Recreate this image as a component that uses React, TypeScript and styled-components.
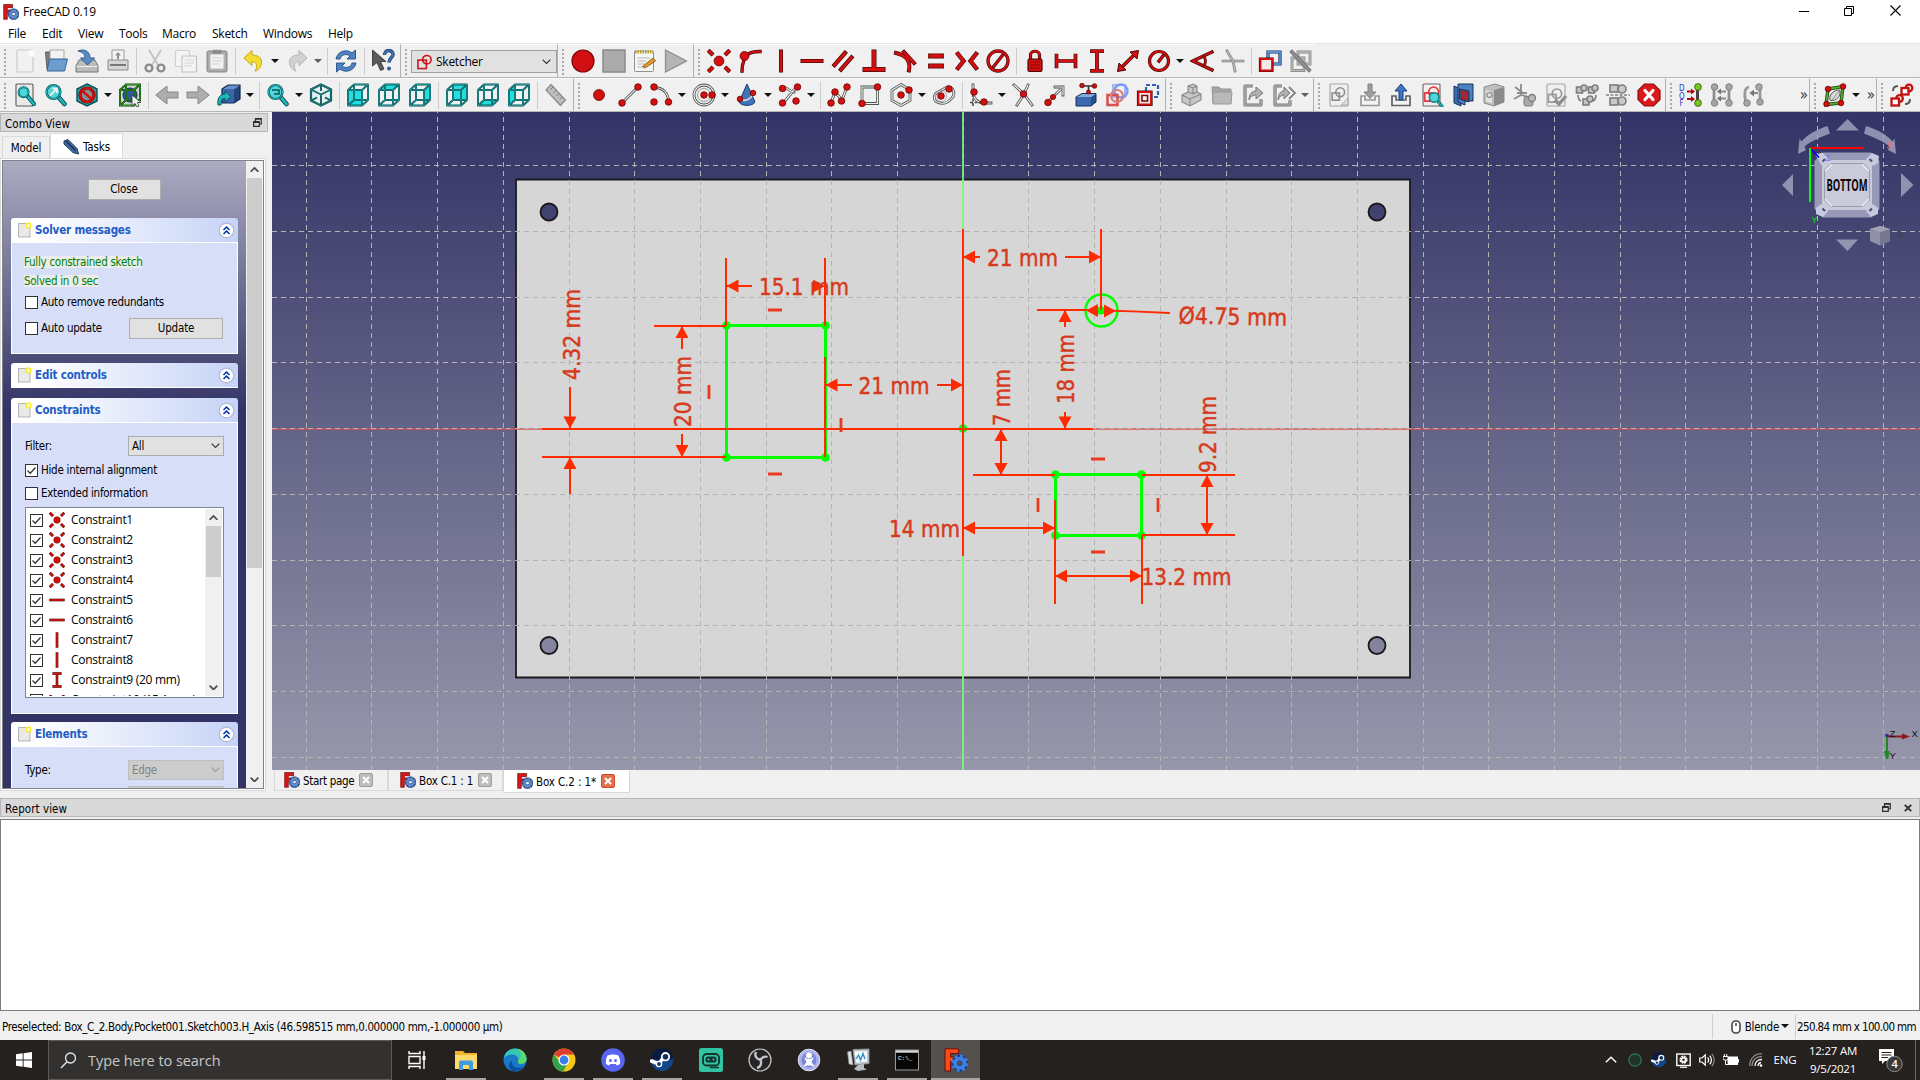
import React from "react";
import styled, { createGlobalStyle, css } from "styled-components";

const TAHOMA = `"DejaVu Sans Condensed", "DejaVu Sans", "Noto Sans", sans-serif`;
const SEGOE = `"Open Sans", "Noto Sans", sans-serif`;

const Global = createGlobalStyle`
  * { box-sizing: border-box; }
  body { margin: 0; background: #f0f0f0; overflow: hidden; }
  svg { display: block; flex: none; }
`;

/* ---------- icon primitives ---------- */

const RED = "#d40f0f";
const DARK = "#4a0808";

type PathProps = { d: string; c?: string; o?: string; w?: number; f?: string; e?: number; cap?: "square" | "butt" };
const Bar = ({ d, c = RED, o = DARK, w = 2.4, f = "none", e = 1.4, cap = "square" }: PathProps) => (
  <g fill={f} strokeLinejoin="miter">
    <path d={d} stroke={o} strokeWidth={w + e} strokeLinecap={cap} />
    <path d={d} stroke={c} strokeWidth={w} strokeLinecap={cap} />
  </g>
);
const Tube = ({ d }: { d: string }) => <Bar d={d} c="#eef0ea" o="#4d534f" w={1.2} e={1.6} />;
const Grey = ({ d, w = 2 }: { d: string; w?: number }) => <Bar d={d} c="#b9b9b9" o="#848484" w={w} e={1.4} />;
const Dot = ({ x, y, r = 3.3, c = RED, o = "#6a0505" }: { x: number; y: number; r?: number; c?: string; o?: string }) => (
  <circle cx={x} cy={y} r={r} fill={c} stroke={o} strokeWidth="0.8" />
);

const cubeEdges = "M2 7H16V22.500H2ZM8 1.500H22V17H8ZM2 7L8 1.500M16 7L22 1.500M16 22.500L22 17M2 22.500L8 17";
const Cube = ({ face }: { face: string }) => (
  <g>
    <path d="M2 7L8 1.500H22V17L16 22.500H2Z" fill="#edf3f3" />
    <path d={face} fill="#22dfe2" />
    <path d={cubeEdges} fill="none" stroke="#0d5558" strokeWidth="1.900" strokeLinejoin="round" />
    <path d={cubeEdges} fill="none" stroke="#25a9ab" strokeWidth="0.700" strokeLinejoin="round" />
  </g>
);
const Lens = ({ x = 9, y = 8, r = 5.5 }: { x?: number; y?: number; r?: number }) => (
  <g>
    <path d={`M${x + r * 0.7} ${y + r * 0.7}L20.5 21`} stroke="#0a5558" strokeWidth="4.6" strokeLinecap="round" />
    <path d={`M${x + r * 0.7} ${y + r * 0.7}L20.5 21`} stroke="#1fb9bd" strokeWidth="2.6" strokeLinecap="round" />
    <circle cx={x} cy={y} r={r} fill="#4fd6d9" stroke="#0a5558" strokeWidth="2.2" />
    <circle cx={x} cy={y} r={r} fill="none" stroke="#27bcc0" strokeWidth="1" />
  </g>
);
const Page = ({ c = "#f4f4f4", o = "#8c8c8c", x = 4, y = 1, w = 16, h = 22 }) => (
  <rect x={x} y={y} width={w} height={h} rx="1" fill={c} stroke={o} strokeWidth="1.1" />
);
const Tray = ({ c = "#8d8d8d" }) => (
  <path d="M3 13H7V17H17V13H21V22.5H3Z" fill="#f3f3f3" stroke={c} strokeWidth="1.7" />
);
const SketchMark = ({ c, x = 0, y = 0, s = 1 }: { c: string; x?: number; y?: number; s?: number }) => (
  <g transform={`translate(${x} ${y}) scale(${s})`} fill="none" stroke={c} strokeWidth="2">
    <rect x="4" y="10" width="9" height="9" />
    <circle cx="14" cy="9" r="5.5" />
  </g>
);
const FreeCadMark = ({ bright = false }: { bright?: boolean }) => (
  <g fill="none">
    <path d="M1 .8H14.500V5.500H6.500V9H11V13.500H6.500V23H1Z" fill={bright ? "#ff4a14" : "#d8171b"} stroke="#6e0b0b" strokeWidth="1" />
    <circle cx="15.800" cy="15.200" r="5.300" stroke="#1f3c6e" strokeWidth="6.400" />
    <circle cx="15.800" cy="15.200" r="7.200" stroke={bright ? "#3b7be0" : "#4a78bb"} strokeWidth="2.800" strokeDasharray="3.200 2.450" />
    <circle cx="15.800" cy="15.200" r="4.600" stroke={bright ? "#3f80e6" : "#5f8bca"} strokeWidth="3.800" />
  </g>
);
const SteamMark = () => (
  <g>
    <circle cx="12" cy="12" r="11" fill="#12478b" />
    <path d="M1 11A11 11 0 0 1 23 11L14 13Z" fill="#0b1b3f" />
    <path d="M1.5 13L9 16L13 10" stroke="#fff" strokeWidth="3.6" fill="none" strokeLinecap="round" />
    <circle cx="15.5" cy="8.7" r="3.7" fill="#12305f" stroke="#fff" strokeWidth="1.8" />
    <circle cx="9" cy="16" r="2.6" fill="#123a70" stroke="#fff" strokeWidth="1.3" />
  </g>
);

const ICONS: Record<string, React.ReactNode> = {
  /* file */
  new: <g><Page c="#f1f1f1" o="#c9c9c9" /><circle cx="18.5" cy="4.5" r="3.6" fill="#fafafa" /></g>,
  open: <g><path d="M1.5 3H8L10 5H18V20H3Z" fill="#7d7d7d" stroke="#5c5c5c" /><path d="M6 1H20V11H6Z" fill="#f2f2f2" stroke="#999" strokeWidth=".8" /><path d="M5.5 10H23.5L20.5 22H3Z" fill="#6d9ccf" stroke="#376496" /></g>,
  save: <g><path d="M4 11H20L23 17V23H1V17Z" fill="#bcbcbc" stroke="#757575" /><path d="M1.5 17.5H22.5" stroke="#eee" /><path d="M3 2C9 -.5 15 2 15 9H19.5L12.5 16L5.5 9H10C10 5.500 8 3 3 2Z" fill="#5a8cc4" stroke="#2b5a94" /></g>,
  print: <g><path d="M6 1H18V12H6Z" fill="#f5f5f5" stroke="#999" /><path d="M12 3L15 6.500H13V10H11V6.500H9Z" fill="#8f8f8f" /><path d="M2 11H22V21H2Z" fill="#d6d6d6" stroke="#888" /><path d="M4 16H20" stroke="#777" strokeWidth="2" /></g>,
  cut: <g fill="none" stroke="#a9a9a9"><path d="M6 1L15 16M18 1L9 16" strokeWidth="2" stroke="#c4c4c4" /><circle cx="6" cy="19" r="3.4" strokeWidth="2.4" stroke="#8b8b8b" /><circle cx="18" cy="19" r="3.4" strokeWidth="2.4" stroke="#8b8b8b" /></g>,
  copy: <g><Page x={1.5} y={1.5} w={14} h={16} o="#d0d0d0" /><Page x={8} y={7} w={14.5} h={16} o="#c0c0c0" /><path d="M10.500 11H20M10.500 14H20M10.500 17H18" stroke="#d2d2d2" /></g>,
  paste: <g><rect x="2" y="2" width="20" height="21" rx="1.500" fill="#a9a9a9" stroke="#878787" /><Page x={5} y={5} w={14} h={15} c="#f2f2f2" o="#bbb" /><rect x="7.500" y=".8" width="9" height="4" fill="#8b8b8b" /><path d="M7 9H17M7 12H17M7 15H15" stroke="#cfcfcf" /></g>,
  undo: <path d="M2 9L10 1.500V6C17 6 21 10 19 16C18 19.500 15 22 13 22C16 18 15 12.500 10 12.500V16.500Z" fill="#f4dd33" stroke="#c8a60c" strokeWidth="1" />,
  redo: <path d="M22 9L14 1.500V6C7 6 3 10 5 16C6 19.500 9 22 11 22C8 18 9 12.500 14 12.500V16.500Z" fill="#d2d2d2" stroke="#b2b2b2" />,
  refresh: <g fill="#4f83c2" stroke="#234f86" strokeWidth=".9"><path d="M2 10C3 3 12 -1 18 4L21.500 1V10H13L16 7C12 4 7 6 6 10Z" /><path d="M22 14C21 21 12 25 6 20L2.500 23V14H11L8 17C12 20 17 18 18 14Z" /></g>,
  whats: <g><path d="M1.500 1V17L6 13.500L9.500 21.500L13 20L9.500 12.500H15Z" fill="#5b5d5a" stroke="#2c2c2c" strokeWidth=".8" /><path d="M13.500 6C13.500 -.5 22.500 .5 22 6C21.500 9 18 9 18 13.500" fill="none" stroke="#1d3f74" strokeWidth="3.400" /><path d="M13.500 6C13.500 -.5 22.500 .5 22 6C21.500 9 18 9 18 13.500" fill="none" stroke="#4a79b8" strokeWidth="1.600" /><circle cx="18" cy="19.500" r="2" fill="#2f5a98" /></g>,
  record: <circle cx="12" cy="12" r="11" fill="#d40f14" stroke="#7a0505" strokeWidth="1.200" />,
  stopMacro: <rect x="1" y="1" width="22" height="22" fill="#ababab" stroke="#8b8b8b" strokeWidth="1.500" />,
  macros: <g><rect x="1.500" y="2" width="19" height="20.500" rx="1" fill="#f5f5f2" stroke="#90908c" /><path d="M2 3H20" stroke="#b69b2a" strokeWidth="3" strokeDasharray="1.500 1" /><path d="M4.500 9H17M4.500 12H13M4.500 15H12M4.500 18H10" stroke="#b5b5b5" /><path d="M9.500 17.500L20 9L22.500 12L12 19Z" fill="#e8952c" stroke="#7a4a10" strokeWidth=".8" /></g>,
  play: <path d="M1.500 1L22.500 12L1.500 23Z" fill="#b4b4b4" stroke="#8e8e8e" strokeWidth="1.300" />,
  /* constraints */
  coincident: <g><Bar cap="butt" d="M1.200 1.200L6 6M22.800 1.200L18 6M1.200 22.800L6 18M22.800 22.800L18 18" w={2.8} /><Dot x={12} y={12} r={4.900} /></g>,
  pointOn: <g><Bar d="M4 22C4 18 4.500 15 6 11M9 6C12 3 16 2.500 22 2.500" w={2} /><Dot x={6.500} y={7} r={4.500} /></g>,
  vertical: <Bar d="M12 2.500V21.500" w={2.600} />,
  horizontal: <Bar d="M2.500 12H21.500" w={2.600} />,
  parallel: <Bar d="M3.500 16L14 4M10 20.500L20.500 8.500" w={2.800} />,
  perp: <Bar d="M12 3V19M3 20.500H21" w={3.600} />,
  tangent: <Bar d="M3 4C12 6 18 12 16 21.500M11 3L21 14" w={2.600} />,
  equal: <Bar d="M6.500 7H17.500M6.500 17H17.500" w={3.400} />,
  symmetric: <Bar d="M3 5L8.500 12L3 19M21 5L15.500 12L21 19" w={3} />,
  block: <g><Bar d="M6.500 19L17.500 5" w={1.900} /><Bar d="M22 12A10 10 0 1 1 2 12A10 10 0 1 1 22 12Z" w={1.900} /></g>,
  lock: <g><Bar d="M7.500 10V6C7.500 1 16.500 1 16.500 6V10" w={1.800} /><rect x="5" y="10" width="14" height="12.500" rx="1.500" fill={RED} stroke={DARK} strokeWidth="1.200" /><path d="M7 13H17M7 16H17M7 19H17" stroke="#8d0707" /></g>,
  hdist: <Bar d="M2.500 6.500V17.500M21.500 6.500V17.500M3 12H21" w={2.300} />,
  vdist: <Bar d="M7 2.200H17M7 21.800H17M12 3V21" w={2.400} />,
  dist: <g><Bar d="M6 18L18 6" w={2.200} /><path d="M22.500 1.500L21 10L14 3ZM1.500 22.500L3 14L10 21Z" fill={RED} stroke={DARK} /></g>,
  radius: <g><Bar d="M21.500 12A9.500 9.500 0 1 1 2.500 12A9.500 9.500 0 1 1 21.500 12Z" w={1.800} /><Bar d="M12 12L16 7" w={2} /></g>,
  angle: <g><Bar d="M22 3L3 12L22 21" w={1.900} /><Bar d="M14 8C16 10 16 14 14 16" w={1.400} /></g>,
  snell: <g><Grey d="M2 12H22" w={1.200} /><Grey d="M6 2L12 12L14 22" w={1.400} /></g>,
  driving: <g><Bar d="M10 3H22V15H10Z" w={1.800} c="#5d8ed0" o="#122e57" /><Bar d="M2.500 10H14V21.500H2.500Z" f="#f3e9e9" w={1.800} /></g>,
  activate: <g><Grey d="M9 3H21V15H9Z" w={1.400} /><Grey d="M3 9H15V21.500H3Z" w={1.400} /><Bar d="M3 3L20 21" w={2.400} c="#8f8f8f" o="#6c6c6c" /></g>,
  /* view */
  fitAll: <g><Page x={3} w={17} c="#e9e9e9" o="#5b5b5b" /><g transform="translate(2.500 2) scale(.9)"><Lens /></g></g>,
  fitSel: <g><Lens x={9.500} y={9} r={7} /><path d="M6 12.500L12 6.500M8.500 5.500H13V10" stroke="#eee" strokeWidth="2" fill="none" /></g>,
  drawStyle: <g><path d="M12 1L22 6V18L12 23L2 18V6Z" fill="#2aa9ad" stroke="#0b4f52" strokeWidth="1.400" /><circle cx="12" cy="12" r="7" fill="#8a9092" stroke="#6e0505" strokeWidth="3.200" /><circle cx="12" cy="12" r="7" fill="none" stroke={RED} strokeWidth="2" /><path d="M7 7.500L17 16.500" stroke={RED} strokeWidth="2.400" /></g>,
  bbox: <g><path d="M3 7L8 3H21V17L16 21H3Z" fill="#ced3ce" /><circle cx="12" cy="12" r="7" fill="#32589b" stroke="#112a56" /><path d={cubeEdges} fill="none" stroke="#0b3d0b" strokeWidth="1.900" /><path d={cubeEdges} fill="none" stroke="#34a521" strokeWidth=".9" /><path d="M14 12V23L17 20.500L19 24L21 23L19.500 19.500H23Z" fill="#f2f2f2" stroke="#333" strokeWidth=".8" /></g>,
  back: <path d="M.8 12L12 3V9H23V15H12V21Z" fill="#adadad" stroke="#858585" />,
  fwd: <path d="M23.200 12L12 3V9H1V15H12V21Z" fill="#adadad" stroke="#858585" />,
  link: <g><path d="M5 6L11 2H23L17 6Z" fill="#6890cb" /><path d="M5 6H17V20H5Z" fill="#3a66aa" /><path d="M17 6L23 2V16L17 20Z" fill="#23467f" /><path d="M5 6L11 2H23V16L17 20H5Z" fill="none" stroke="#10284e" strokeWidth="1.200" /><path d="M1 22C0 14 4 11 8 11V8L14 13.500L8 19V15.500C5 15.500 4 17 4 22Z" fill="#1fb9bd" stroke="#0a5558" /></g>,
  zoomIcon: <g><Lens x={9.500} y={9} r={7} /><path d="M6 7H13V11H8" stroke="#0a5558" strokeWidth="1.600" fill="none" /></g>,
  iso: <g><path d="M12 1.500L22 6.500V17.500L12 22.500L2 17.500V6.500Z" fill="#e2f0f0" stroke="#0b4f52" strokeWidth="2.200" /><path d="M2 6.500L12 11.500L22 6.500M12 11.500V22.500M12 1.500V8M2 17.500L8 14.500M22 17.500L16 14.500" stroke="#0b5558" strokeWidth="1.800" fill="none" /><path d="M12 1.500L22 6.500V17.500L12 22.500L2 17.500V6.500ZM2 6.500L12 11.500L22 6.500" fill="none" stroke="#2aa9ad" strokeWidth=".6" /></g>,
  front: <Cube face="M2 7H16V22.500H2Z" />,
  top: <Cube face="M2 7L8 1.500H22L16 7Z" />,
  right: <Cube face="M16 7L22 1.500V17L16 22.500Z" />,
  rear: <Cube face="M8 1.500H22V17H8Z" />,
  bottom: <Cube face="M2 22.500L8 17H22L16 22.500Z" />,
  left: <Cube face="M2 7L8 1.500V17L2 22.500Z" />,
  ruler: <g><path d="M7 1.500L21.500 17L16.500 22.500L2 7Z" fill="#bdbdbd" stroke="#8b8b8b" strokeWidth="1.200" /><path d="M9 4L6.500 6.500M12 7.500L10 9.500M15 10.500L12.500 13M18 14L16 16" stroke="#777" /></g>,
  /* geometry */
  point: <Dot x={12} y={12} r={5.500} />,
  line: <g><Tube d="M4 20L20 4" /><Dot x={4} y={20} /><Dot x={20} y={4} /></g>,
  arc: <g><Tube d="M6 4.500C14 5 19 10 19.500 18" /><Dot x={5} y={4} /><Dot x={5} y={19} /><Dot x={19.500} y={19} /></g>,
  circle: <g><Tube d="M22 12A10 10 0 1 1 2 12A10 10 0 1 1 22 12Z" /><circle cx="12" cy="12" r="6.500" fill="none" stroke="#999" /><Dot x={12} y={12} /><Dot x={20} y={12} /></g>,
  cone: <g><path d="M12 1L20 19C18 23.500 6 23.500 4 19Z" fill="#3f74b8" stroke="#1b3d70" /><path d="M5 16C9 19 16 17 18 10" fill="none" stroke="#ddd" strokeWidth="1.600" /><Dot x={5} y={16} r={2.800} /><Dot x={18} y={10} r={2.800} /></g>,
  bspline: <g><Tube d="M4.500 19.500C11 15 10 13 12 12C14 10 13 8 19.500 4.500M5 5C9 3 11 9 16 9" /><Dot x={4.500} y={5.500} /><Dot x={19.500} y={4} /><Dot x={4.500} y={20} /><Dot x={18} y={18} /></g>,
  polyline: <g><Tube d="M4 20L8 9L15 17L20 4" /><Dot x={4} y={20} /><Dot x={8} y={9} /><Dot x={14.500} y={18} /><Dot x={20} y={4} /></g>,
  rect: <g><Tube d="M4 4H19.500V20.500H4Z" /><Dot x={19.500} y={4} /><Dot x={4} y={20.500} /></g>,
  polygon: <g><Tube d="M12 1.500L21 7V17.500L12 22.500L3 17.500V7Z" /><Dot x={12} y={12} /><Dot x={20} y={7} /></g>,
  slot: <g><Tube d="M8 8L15 4C21 3 24 11 20 15C17 19 12 21 8 20C0 19 1 10 8 8Z" /><Dot x={9} y={13} /><Dot x={17} y={6} /><circle cx="9" cy="13" r="5.500" fill="none" stroke="#999" strokeWidth=".8" /></g>,
  fillet: <g><Tube d="M4 2V10C5 16 9 20 15 20H22" /><path d="M4 11V23M1 19.500H15" stroke="#444" strokeWidth="1.500" strokeDasharray="3 1.500" /><Dot x={5} y={9} /><Dot x={15} y={19} /></g>,
  trim: <g><Tube d="M12 11L20 22M2 2L12 11M16 2L12 11L5 22" /><Dot x={11.500} y={11} /></g>,
  extend: <g><Tube d="M5 19L11 13M13.500 10.500L18 6M12 4H20V12" /><Dot x={5} y={19.500} /><Dot x={10} y={14} r={2.600} /></g>,
  external: <g><path d="M2 14L8 10.500H22L17 14Z" fill="#83acd9" /><path d="M2 14H17V23H2Z" fill="#3a6aad" /><path d="M17 14L22 10.500V19L17 23Z" fill="#27508a" /><path d="M2 14L8 10.500H22V19L17 23H2Z" fill="none" stroke="#142e58" /><path d="M9 3H20M14.500 3V10" stroke="#333" strokeWidth="1.600" /><Dot x={8} y={2.500} r={2.300} /><Dot x={20.500} y={3} r={2.300} /><Dot x={14.500} y={9} r={2} /></g>,
  carbon: <g fill="none"><path d="M8 2H20V14H8Z" stroke="#9db8f2" strokeWidth="2" /><circle cx="16" cy="8" r="6.500" stroke="#7d9df0" strokeWidth="2.400" /><rect x="2.500" y="12" width="10" height="10" stroke="#d65252" strokeWidth="2.600" /><circle cx="12" cy="13" r="6" stroke="#da7a7a" strokeWidth="2.200" /></g>,
  construction: <g><path d="M10 2H22V14H10Z" fill="none" stroke="#2e62b0" strokeWidth="2.200" strokeDasharray="4 2" /><Bar d="M2.500 9H15V21.500H2.500Z" f="#f3e9e9" w={1.800} /><path d="M6 12.500H11.500V18H6Z" fill="#fff" stroke="#7a0505" strokeWidth="1.600" /></g>,
  /* structure */
  part: <g fill="#c6c6c6" stroke="#888" strokeWidth="1.100"><path d="M3 12L9 9V3L14 1L18 3V9L22 11V17L11 23L3 19Z" /><path d="M3 12L11 16V23M11 16L22 11M9 9L14 11L18 9M9 3L14 5L18 3M14 5V11" fill="none" /></g>,
  group: <g><path d="M2 4H9L11 6H21V20H3Z" fill="#a3a3a3" stroke="#959595" /><path d="M3 9H22L21 21H3Z" fill="#b9b9b9" stroke="#999" /></g>,
  mklink: <g fill="none"><path d="M12 3H4V22H20V16" stroke="#777" strokeWidth="3.200" strokeLinejoin="round" /><path d="M12 3H4V22H20V16" stroke="#bbb" strokeWidth="1.200" /><path d="M8 17C8 11 11 8 15 8V4L22 10L15 16V12C12 12 10 13 8 17Z" fill="#b0b0b0" stroke="#777" /></g>,
  mklinks: <g fill="none"><path d="M10 3H3V22H18V17" stroke="#777" strokeWidth="3.200" strokeLinejoin="round" /><path d="M10 3H3V22H18V17" stroke="#bbb" strokeWidth="1.200" /><path d="M6 17C6 11 9 8 12 8V4L18 10L12 16V12C10 12 8 13 6 17Z" fill="#b0b0b0" stroke="#777" /><path d="M17 4L23 10L17 16" stroke="#808080" strokeWidth="1.800" /></g>,
  sketchNew: <g><Page x={3} w={18} c="#f0f0f0" o="#a3a3a3" /><SketchMark c="#8e8e8e" x={2} y={2} s={0.8} /><path d="M14 22L21 15V22Z" fill="#ddd" stroke="#999" strokeWidth=".7" /></g>,
  sketchEdit: <g><Tray c="#999" /><path d="M10 1H14V9H18L12 15.500L6 9H10Z" fill="#9d9d9d" stroke="#808080" /></g>,
  sketchLeave: <g><Tray c="#5f6162" /><path d="M10 17H14V8H18L12 1L6 8H10Z" fill="#3e76c4" stroke="#1b3f76" /></g>,
  sketchView: <g><Page x={3} w={17} c="#f4eeee" o="#666" /><SketchMark c="#e2393c" x={1} y={1} s={0.9} /><g transform="translate(8 9) scale(.68)"><Lens r={7} /></g></g>,
  section: <g><path d="M3 3L10 6V23L3 20Z" fill="#3a6cb0" stroke="#16335f" /><path d="M7 1H22V18H14V22L7 19Z" fill="#4e80c2" stroke="#16335f" /><path d="M8.500 6L18 8V19L8.500 16Z" fill="#4f4a6c" stroke="#16335f" /><path d="M11 9L16 10V16L11 15Z" fill="none" stroke={RED} strokeWidth="1.600" /></g>,
  mapFace: <g><path d="M2 4L13 1L22 4V19L12 23L2 20Z" fill="#bfbfbf" stroke="#8d8d8d" /><path d="M12 7L22 4V19L12 23Z" fill="#8b8b8b" /><path d="M4 7L10 8.500V20L4 18.500Z" fill="#e3e3e3" /><circle cx="7.500" cy="12" r="2.500" fill="none" stroke="#999" strokeWidth="1.500" /></g>,
  reorient: <g><path d="M8 1V12L1 16M8 12L16 14M2 4L10 10M4 10H14" stroke="#8c8c8c" strokeWidth="1.800" fill="none" /><rect x="11" y="14" width="9" height="9" rx="2" fill="#aaa" stroke="#7c7c7c" /><circle cx="19" cy="15" r="3.500" fill="#bbb" stroke="#7c7c7c" strokeWidth="1.300" /></g>,
  validate: <g><Page x={3} w={18} c="#efefef" o="#a5a5a5" /><SketchMark c="#969696" x={1} y={3} s={0.85} /><path d="M11 17L15 21L22 13" stroke="#8f8f8f" strokeWidth="3.400" fill="none" /></g>,
  merge: <g fill="#c4c4c4" stroke="#7e7e7e" strokeWidth="1.600"><rect x="1.500" y="4" width="6" height="6" /><circle cx="9" cy="5" r="3" /><rect x="13.500" y="4" width="6" height="6" /><circle cx="20" cy="5" r="3" /><rect x="8" y="16" width="6" height="6" /><circle cx="15" cy="16" r="3" /><path d="M3 12C3 15 4 17 6 18M21 12C21 15 20 17 18 18" fill="none" /></g>,
  mirror: <g fill="#c9c9c9" stroke="#808080" strokeWidth="1.700"><rect x="4" y="2" width="8" height="7" /><circle cx="16" cy="6" r="4" /><rect x="4" y="15" width="8" height="7" /><circle cx="16" cy="18" r="4" /><path d="M0 12H24" strokeDasharray="3 1.500" /></g>,
  stop: <g><path d="M7.500 1H16.500L23 7.500V16.500L16.500 23H7.500L1 16.500V7.500Z" fill="#d9191c" stroke="#950b0b" strokeWidth="1.200" /><path d="M8 7.500L16 16.500M16 7.500L8 16.500" stroke="#fff" strokeWidth="3.200" strokeLinecap="round" /></g>,
  dof: <g><path d="M18.500 4V20" stroke="#444" strokeWidth="3" /><path d="M8 8.500H15M8 16H15" stroke="#b30b0b" strokeWidth="2" /><path d="M12 5.500L16 8.500L12 11.500ZM12 13L16 16L12 19Z" fill="#b30b0b" /><Dot x={19} y={4} r={3.400} c="#79c521" o="#2e5a08" /><Dot x={19} y={20} r={3.400} c="#79c521" o="#2e5a08" /><text x="0" y="8" fontFamily={TAHOMA} fontSize="8" fill="#2b36c4">D</text><text x="0" y="15.600" fontFamily={TAHOMA} fontSize="8" fill="#2b36c4">O</text><text x=".5" y="23" fontFamily={TAHOMA} fontSize="8" fill="#2b36c4">F</text></g>,
  selC: <g><path d="M4 4V20M19 4V20M4 4H8M4 20H8M16 4H19M16 20H19" stroke="#8f8f8f" strokeWidth="2.800" fill="none" /><path d="M8 8.500H16M8 15.500H16" stroke="#8a8a8a" strokeWidth="2" /><path d="M11 5.500L7 8.500L11 11.500ZM11 12.500L7 15.500L11 18.500Z" fill="#777" /><Dot x={19} y={4} r={3.300} c="#a5a5a5" o="#777" /><Dot x={19} y={20} r={3.300} c="#a5a5a5" o="#777" /><Dot x={4.500} y={20} r={3.300} c="#a5a5a5" o="#777" /><Dot x={4.500} y={4} r={3.300} c="#a5a5a5" o="#777" /></g>,
  selE: <g><path d="M8 4C3 5 3 12 5 20M19 5V19" stroke="#999" strokeWidth="2.800" fill="none" /><path d="M11 10H17" stroke="#8a8a8a" strokeWidth="2.200" /><path d="M13 6.500L8.500 10L13 13.500Z" fill="#777" /><Dot x={18} y={4} r={3.300} c="#a5a5a5" o="#777" /><Dot x={19} y={19} r={3.300} c="#a5a5a5" o="#777" /><Dot x={6} y={20} r={3.300} c="#a5a5a5" o="#777" /></g>,
  bsplineInfo: <g><path d="M5 6L20 3.500L18 20L3 21.500Z" fill="#e8eee0" stroke="#204a10" strokeWidth="3.400" /><path d="M5 6L20 3.500L18 20L3 21.500Z" fill="none" stroke="#56ab2f" strokeWidth="1.800" /><path d="M7 17C5 9 17 5 17 8C18 16 9 19 7 17Z" fill="#ddd" stroke="#555" /><path d="M9 17L16 8" stroke="#888" /><Dot x={5} y={6} r={2.800} /><Dot x={20} y={3.500} r={2.800} /><Dot x={18} y={20} r={2.800} /><Dot x={3.500} y={21} r={2.800} /></g>,
  virtual: <g><g fill="#fff" stroke="#c01010" strokeWidth="2.300"><circle cx="19" cy="5" r="3.300" /><rect x="11.500" y="5" width="7" height="6.500" /><circle cx="9.500" cy="15.500" r="3.300" /><rect x="1.500" y="15.500" width="7.500" height="7" /></g><path d="M3 8C3 4 5 3 8 3M20 16C20 20 18 21 15 21" stroke="#555" strokeWidth="2" fill="none" /></g>,
};

const Icon = ({ name, size = 24 }: { name: string; size?: number }) => (
  <svg width={size} height={size} viewBox="0 0 24 24">{ICONS[name]}</svg>
);

/* ---------- window chrome ---------- */

const Window = styled.div`
  width: 1920px; height: 1080px; display: flex; flex-direction: column;
  background: #f0f0f0; color: #000; overflow: hidden;
  font: 11.5px/14px ${TAHOMA};
`;
const TitleBar = styled.header`
  height: 23px; background: #fff; display: flex; align-items: center; padding-left: 3px; gap: 4px;
  font: 12px/16px ${SEGOE}; letter-spacing: -0.2px;
`;
const TitleText = styled.span`flex: 1;`;
const WinButtons = styled.div`display: flex;`;
const WinButton = styled.div<{ $w: number }>`width: ${p => p.$w}px; height: 22px; display: grid; place-items: center; padding-bottom: 2px;`;
const MenuBar = styled.nav`
  height: 21px; background: #fff; border-bottom: 1px solid #e6e6e6; display: flex; align-items: center;
  padding: 2px 0 0 8px; font: 12px/16px ${SEGOE}; letter-spacing: -0.25px;
`;
const MenuItem = styled.span<{ $w: number }>`width: ${p => p.$w}px; white-space: nowrap;`;

const ToolRow = styled.div<{ $h: number }>`
  height: ${p => p.$h}px; display: flex; background: #f0f0f0; border-bottom: 1px solid #b5b5b5;
`;
const ToolBar = styled.div<{ $w?: number; $last?: boolean }>`
  display: flex; align-items: center; height: 100%;
  ${p => p.$w && css`width: ${p.$w}px;`}
  border-right: ${p => (p.$last ? "none" : "1px solid #b0b0b0")};
  border-top: 1px solid #fbfbfb;
`;
const Grip = styled.i`
  width: 9px; flex: none; height: 27px;
  background: radial-gradient(circle, #a8a8a8 1px, transparent 1.4px) 3px 0 / 4px 4px repeat-y;
`;
const ToolButton = styled.div`width: 31px; flex: none; display: grid; place-items: center;`;
const Divider = styled.i`width: 6px; height: 27px; flex: none; background: linear-gradient(#cdcdcd, #cdcdcd) 3px 0 / 1px 100% no-repeat;`;
const DropArrow = styled.i<{ $dim?: boolean }>`
  width: 12px; flex: none; height: 5px;
  &::before { content: ""; display: block; margin: 0 auto; width: 0; border: 4px solid transparent; border-bottom: 0; border-top-color: ${p => (p.$dim ? "#5f5f5f" : "#111")}; }
`;
const More = styled.span<{ $w: number }>`width: ${p => p.$w}px; text-align: right; padding-right: 1px; font-size: 15px; color: #333; letter-spacing: -1px;`;
const WorkbenchSelect = styled.div`
  width: 146px; height: 23px; border: 1px solid #a0a0a0; background: #e1e1e1; display: flex; align-items: center;
  padding: 1px 5px 0; margin-left: 1px; gap: 4px; font: 12px/16px ${SEGOE}; letter-spacing: -0.25px;
  span { flex: 1; }
`;

const Chevron = ({ w = 9, c = "#333", up = false, sw = 1.3 }: { w?: number; c?: string; up?: boolean; sw?: number }) => (
  <svg width={w} height={w * 0.6} viewBox="0 0 10 6"><path d={up ? "M.7 5.300L5 1L9.300 5.300" : "M.7 .7L5 5L9.300 .7"} fill="none" stroke={c} strokeWidth={sw} /></svg>
);

const Tools = ({ items }: { items: string }) => (
  <>
    {items.split(" ").map((k, i) =>
      k === "|" ? <Divider key={i} /> : k === "v" ? <DropArrow key={i} /> : k === "w" ? <DropArrow $dim key={i} /> : <ToolButton key={i}><Icon name={k} /></ToolButton>
    )}
  </>
);

/* ---------- combo view ---------- */

const Workspace = styled.div`height: 685px; display: flex; flex: none;`;
const SidePanel = styled.aside`width: 272px; flex: none; display: flex; flex-direction: column; padding-top: 1px;`;
const DockTitle = styled.div<{ $w?: number }>`
  width: ${p => (p.$w ? p.$w + "px" : "100%")}; height: 19px; background: #d9d9d9; border: 1px solid #b6b6b6; flex: none;
  display: flex; align-items: center; padding: 0 ${p => (p.$w ? 5 : 7)}px 0 4px; gap: 13px; line-height: 16px; letter-spacing: 0.06px;
  span { flex: 1; padding-top: 2px; }
`;
const TabStrip = styled.div`height: 26px; display: flex; align-items: flex-end; padding-left: 2px; flex: none;`;
const SideTab = styled.div<{ $w: number; $on?: boolean }>`
  width: ${p => p.$w}px; height: ${p => (p.$on ? 25 : 22)}px; border: 1px solid #d9d9d9; border-bottom: 0;
  background: ${p => (p.$on ? "#fff" : "#f0f0f0")}; display: flex; align-items: center; justify-content: center; gap: 4px;
  font-size: 11.5px; letter-spacing: -0.15px; padding-top: 1px;
`;
const TabPane = styled.div`width: 266px; height: 633px; border: 1px solid #dadada; background: #fff; padding: 1px; flex: none;`;
const ScrollFrame = styled.div`width: 262px; height: 629px; border: 1px solid #82828c; display: flex; overflow: hidden;`;
const TaskArea = styled.div`
  width: 243px; height: 100%; background: linear-gradient(#ababc1 0, #333366 250px); overflow: hidden;
  display: flex; flex-direction: column; align-items: stretch; padding: 18px 8px 0;
`;
const ScrollBar = styled.div<{ $w: number }>`
  width: ${p => p.$w}px; background: #f0f0f0; display: flex; flex-direction: column; align-items: center; flex: none;
`;
const ScrollCap = styled.div`height: 17px; display: grid; place-items: center; flex: none;`;
const Thumb = styled.div<{ $h: number }>`width: 15px; height: ${p => p.$h}px; background: #cdcdcd; flex: none;`;
const Spacer = styled.i`flex: 1;`;
const PushButton = styled.div<{ $w: number; $mr?: number }>`
  width: ${p => p.$w}px; height: 21px; border: 1px solid #adadad; background: #e1e1e1; text-align: center; line-height: 19px; font-size: 11.5px;
  letter-spacing: -0.15px; flex: none; margin-right: ${p => p.$mr || 0}px;
`;
const CloseWrap = styled.div`display: flex; justify-content: center; height: 39px; padding-right: 1px; flex: none;`;
const Group = styled.section<{ $gap: number }>`margin-bottom: ${p => p.$gap}px; flex: none;`;
const GroupHead = styled.div`
  height: 25px; border-radius: 3px 3px 0 0; background: linear-gradient(90deg, #fff 10%, #c6d3f7); display: flex; align-items: center;
  padding: 0 3px 0 7px; gap: 3px; color: #215dc6; font: bold 11.5px/16px ${TAHOMA}; letter-spacing: -0.17px;
  border-bottom: 1px solid #fff;
  span { flex: 1; }
`;
const GroupBody = styled.div<{ $h: number }>`
  height: ${p => p.$h}px; background: #d6dff7; border: 1px solid #fff; border-top: 0; padding: 0 13px; overflow: hidden;
`;
const Line = styled.div<{ $h: number; $j?: boolean; $t?: number; $b?: number }>`
  height: ${p => p.$h}px; display: flex; align-items: center; gap: 3px; white-space: nowrap; font-size: 11.5px; letter-spacing: -0.27px;
  margin: ${p => p.$t || 0}px 0 ${p => p.$b || 0}px;
  ${p => p.$j && css`justify-content: space-between;`}
`;
const Inline = styled.div<{ $gap?: number }>`display: flex; align-items: center; gap: ${p => p.$gap ?? 3}px;`;
const Good = styled.span`color: #008000; background: #ececec; line-height: 12px; margin-left: -1px;`;
const Check = styled.i`
  width: 13px; height: 13px; border: 1px solid #333; background: #fff; flex: none; display: grid; place-items: center;
`;
const Select = styled.div<{ $off?: boolean }>`
  width: 96px; height: 20px; border: 1px solid ${p => (p.$off ? "#bfbfbf" : "#adadad")}; background: ${p => (p.$off ? "#cccccc" : "#e1e1e1")};
  color: ${p => (p.$off ? "#838383" : "#000")}; display: flex; align-items: center; justify-content: space-between; padding: 0 3px;
  flex: none;
`;
const ListBox = styled.div`
  width: 199px; height: 191px; border: 1px solid #7a8795; background: #fff; display: flex; overflow: hidden; padding: 1px; flex: none;
`;
const ListItems = styled.div`flex: 1; overflow: hidden; padding-top: 1px;`;
const ListRow = styled.div`
  height: 20px; display: flex; align-items: center; gap: 6px; padding-left: 3px; white-space: nowrap;
  font: 12px/16px ${SEGOE}; letter-spacing: -0.3px;
`;

const CheckBox = ({ on = false }: { on?: boolean }) => (
  <Check>{on && <svg width="11" height="11" viewBox="0 0 11 11"><path d="M1.500 5.500L4.200 8.200L9.500 2.500" fill="none" stroke="#333" strokeWidth="1.300" /></svg>}</Check>
);
const TaskDoc = () => (
  <svg width="14" height="16" viewBox="0 0 14 16"><rect x=".5" y="1.500" width="11.500" height="13.500" fill="#e9e9e6" stroke="#b5b5b5" /><circle cx="10.500" cy="3.500" r="3.200" fill="#f6ee3a" /><circle cx="10.500" cy="3.500" r="1.300" fill="#fff" /></svg>
);
const Collapse = () => (
  <svg width="17" height="17" viewBox="0 0 17 17"><circle cx="8.500" cy="8.500" r="7.300" fill="#fff" stroke="#b0b8d8" strokeWidth="1.200" /><path d="M5.500 8L8.500 5L11.500 8M5.500 12L8.500 9L11.500 12" fill="none" stroke="#00309c" strokeWidth="1.500" /></svg>
);
const FloatIcon = () => (
  <svg width="9" height="9" viewBox="0 0 9 9"><path d="M2.500 3V.7H8.300V6H6.500M.6 3.500H6.300V8.400H.6ZM.6 4.300H6.300M2.500 1.200H8.300" fill="none" stroke="#2e2e2e" strokeWidth="1.200" /></svg>
);
const Head = ({ title }: { title: string }) => (
  <GroupHead><TaskDoc /><span>{title}</span><Collapse /></GroupHead>
);

const CONSTRAINTS: [string, string][] = [
  ["coincident", "Constraint1"], ["coincident", "Constraint2"], ["coincident", "Constraint3"], ["coincident", "Constraint4"],
  ["horizontal", "Constraint5"], ["horizontal", "Constraint6"], ["vertical", "Constraint7"], ["vertical", "Constraint8"],
  ["vdist", "Constraint9 (20 mm)"], ["hdist", "Constraint10 (15.1 mm)"],
];

/* ---------- 3D view ---------- */

const DocArea = styled.main`flex: 1; display: flex; flex-direction: column;`;
const DocTabs = styled.div`height: 27px; display: flex; padding-left: 2px; align-items: flex-start;`;
const DocTab = styled.div<{ $w: number; $on?: boolean; $pl: number; $ls: number }>`
  width: ${p => p.$w}px; height: ${p => (p.$on ? 23 : 21)}px; border: 1px solid #d9d9d9; border-top: 0; background: ${p => (p.$on ? "#fff" : "#f0f0f0")};
  display: flex; align-items: center; padding-left: ${p => p.$pl}px; gap: 3px; font-size: 11.5px; letter-spacing: ${p => p.$ls}px; white-space: nowrap;
  span { padding-top: 2px; }
`;
const TabClose = styled.i<{ $on?: boolean }>`
  width: 14px; height: 14px; border-radius: 2px; border: 1px solid ${p => (p.$on ? "#d2452a" : "#9d9d9d")}; background: ${p => (p.$on ? "#e27350" : "#bdbdbd")};
  display: grid; place-items: center; margin-left: 2px;
`;

const DIM = "#ff2a00";
const INK = "#d63a1c";
const head = (x: number, y: number, dir: "l" | "r" | "u" | "d") => {
  const a = 12, b = 6.5;
  return {
    l: `M${x} ${y}l${a} ${-b}v${2 * b}z`, r: `M${x} ${y}l${-a} ${-b}v${2 * b}z`,
    u: `M${x} ${y}l${-b} ${a}h${2 * b}z`, d: `M${x} ${y}l${-b} ${-a}h${2 * b}z`,
  }[dir];
};
const HEADS = [
  head(726.5, 286, "l"), head(825, 286, "r"), head(682, 326, "u"), head(682, 457, "d"), head(570, 428.5, "d"), head(570, 457, "u"),
  head(825.5, 385, "l"), head(963, 385, "r"), head(963, 257, "l"), head(1101, 257, "r"), head(1065, 310, "u"), head(1065, 428.5, "d"),
  head(1001, 429, "u"), head(1001, 475, "d"), head(1207, 475, "u"), head(1207, 535, "d"), head(963, 528, "l"), head(1055, 528, "r"),
  head(1055, 576, "l"), head(1142, 576, "r"), head(1086, 310.5, "l"), head(1116, 311, "r"),
].join("");
const DIM_LINES =
  "M726 258V326M825 258V326M726 286H752M654 326H726M542 457H726M682 326V349M682 434V457M570 387V429M570 457V494M542 429H1093" +
  "M825 357V457M825 385H852M937 385H963M963 229V556M963 257H980M1065 257H1101M1101 229V310M1037 310H1098M1065 310V327M1065 412V429" +
  "M1001 429V475M973 475H1055M1142 475H1235M1142 535H1235M1207 475V535M963 528H1055M1055 500V604M1142 535V604M1055 576H1142";
const TICKS = "M768 310H782M709 385V399M841 418V432M768 474H782M1091 459H1105M1038 498V512M1158 498V512M1091 552H1105";
const LABELS: { t: string; x: number; y: number; w: number; r?: number }[] = [
  { t: "15.1 mm", x: 759, y: 294.5, w: 90 }, { t: "21 mm", x: 858.5, y: 394, w: 71 }, { t: "21 mm", x: 987, y: 265.5, w: 71 },
  { t: "14 mm", x: 889, y: 536.5, w: 71 }, { t: "13.2 mm", x: 1141.5, y: 584.5, w: 90 }, { t: "Ø4.75 mm", x: 1178.5, y: 323.5, w: 108.5, r: 1.2 },
  { t: "4.32 mm", x: 579.5, y: 380, w: 91, r: -90 }, { t: "20 mm", x: 691, y: 427, w: 71, r: -90 }, { t: "18 mm", x: 1074, y: 404, w: 70, r: -90 },
  { t: "7 mm", x: 1010, y: 426, w: 57, r: -90 }, { t: "9.2 mm", x: 1216, y: 473, w: 77, r: -90 },
];
const POINTS = [[726.5, 325.5], [825.5, 325.5], [726.5, 457.5], [825.5, 457.5], [963, 428.5], [1055.5, 474.5], [1141.5, 474.5], [1055.5, 535.5], [1141.5, 535.5]];
const GRID_X = Array.from({ length: 25 }, (_, i) => Math.floor(963.2 + (i - 10) * 65.7) + 0.5);
const GRID_Y = Array.from({ length: 10 }, (_, i) => Math.floor(428.6 + (i - 4) * 65.72) + 0.5);
const HOLES = [[549, 212], [1377, 212], [549, 645.5], [1377, 645.5]];
const hole = (x: number, y: number) => `M${x - 8.5} ${y}a8.500 8.500 0 1 0 17 0a8.500 8.500 0 1 0 -17 0Z`;

const NavCube = () => (
  <g>
    <g fill="#a3a5be" fillOpacity=".82">
      <path d="M1836 130.500L1847.500 119L1859 130.500ZM1782 185L1793 174V196ZM1901 173L1913.500 185L1901 197ZM1836 239.500H1858L1847.500 251Z" />
      <path d="M1827.500 126L1830 133.500C1820 137 1810 142 1804.500 146.500L1806 150L1798 154L1799.500 138.500L1801.500 141.500C1808 134 1818 129 1827.500 126Z" />
      <path d="M1866 126L1864 133.500C1874 137 1884 142 1889.500 146.500L1888 150L1896 154L1894.500 138.500L1892.500 141.500C1886 134 1876 129 1866 126Z" />
    </g>
    <path d="M1823 152.500H1871L1879.500 161V209L1871 217.500H1823L1814.500 209V161Z" fill="#9799b6" />
    <path d="M1822 160H1872V210H1822Z" fill="#cacadb" />
    <path d="M1815.500 155L1822 152.500L1829 159L1822 166ZM1872 153L1879 156L1878 163L1873 166L1866 159ZM1816 208L1821 204L1828 211L1823 217L1816 214ZM1878 208L1873 204L1866 211L1871 217L1878 214Z" fill="#c9cadd" />
    <path d="M1831 163.500H1863L1869.500 170V200L1863 206.500H1831L1824.500 200V170Z" fill="none" stroke="#9a9bb6" strokeWidth="1" />
    <path d="M1825 171L1832 164.500M1862 164.500L1869 171M1869 199L1862 206M1832 206L1825 199" stroke="#efeff6" strokeWidth="1.300" />
    <path d="M1822.500 161.500L1825 159M1869.500 159L1872 161.500M1825 211L1822.500 208.500M1869.500 211L1872 208.500" stroke="#4a4b7a" strokeWidth="2" />
    <path d="M1810 148L1819 157.500" stroke="#0000ff" strokeWidth="1.800" />
    <path d="M1810 148H1864" stroke="#ff0000" strokeWidth="2" />
    <path d="M1810 148V202" stroke="#00ff00" strokeWidth="2" />
    <g fontFamily={`"Liberation Sans", sans-serif`} fontSize="9">
      <text x="1811.500" y="223" fill="#00f000">Y</text>
      <text x="1886.500" y="147.500" fill="#ff6b68">X</text>
      <text x="1825" y="160.500" fill="#7777ff">Z</text>
    </g>
    <text x="1826.500" y="191" fontFamily={`"Open Sans", sans-serif`} fontWeight="700" fontSize="15.500" textLength="41" lengthAdjust="spacingAndGlyphs" fill="#050505">BOTTOM</text>
    <path d="M1870 229L1880 226L1890 229V241L1880 245.500L1870 241Z" fill="#8f8fa5" />
    <path d="M1880 232L1890 229V241L1880 245.500Z" fill="#77778f" />
    <path d="M1870 229L1880 226L1890 229L1880 232Z" fill="#a3a3b6" />
    <path d="M1894.500 233H1905.500L1900 239Z" fill="#44445c" />
  </g>
);

const Scene = () => (
  <svg width="1648" height="658" viewBox="272 112 1648 658">
    <defs>
      <linearGradient id="sky" x1="0" y1="0" x2="0" y2="1"><stop offset="0" stopColor="#333366" /><stop offset="1" stopColor="#9797ab" /></linearGradient>
    </defs>
    <rect x="272" y="112" width="1648" height="658" fill="url(#sky)" />
    <path fillRule="evenodd" fill="#d6d6d6" stroke="#1a1a1e" strokeWidth="1.800" d={"M516 179.500H1410V677.500H516Z" + HOLES.map(([x, y]) => hole(x, y)).join("")} />
    <path d="M272 429H1920" stroke="#d65454" strokeWidth="1.500" />
    <g stroke="#b4b4b4" strokeDasharray="5 4" shapeRendering="crispEdges">
      {GRID_X.map(x => <path key={x} d={`M${x} 770V112`} />)}
      {GRID_Y.map(y => <path key={y} d={`M272 ${y}H1920`} />)}
    </g>
    <path d="M963 112V770" stroke="#74ff74" strokeWidth="1.700" />
    <g fill="none" stroke="#00ff00" strokeWidth="3">
      <path d="M726.500 325.500H825.500V457.500H726.500ZM1055.500 474.500H1141.500V535.500H1055.500Z" />
      <circle cx="1101.500" cy="310.500" r="16" strokeWidth="2.400" />
    </g>
    {POINTS.map(([x, y]) => <circle key={x + "," + y} cx={x} cy={y} r="4.300" fill="#00ff00" />)}
    <circle cx="1101" cy="310.500" r="4" fill="#00ff00" />
    <g fill="none" stroke={DIM}>
      <path d={DIM_LINES} strokeWidth="2" shapeRendering="crispEdges" />
      <path d="M1104 310.500L1133 311.300L1170 313" strokeWidth="1.800" />
      <path d={TICKS} strokeWidth="2.800" stroke="#ea3a1c" />
    </g>
    <path d={HEADS} fill={DIM} />
    <g fill={INK} stroke={INK} strokeWidth=".45" fontFamily={TAHOMA} fontSize="23">
      {LABELS.map(l => (
        <text key={l.t + l.x} x={l.x} y={l.y} textLength={l.w} lengthAdjust="spacingAndGlyphs" transform={l.r ? `rotate(${l.r} ${l.x} ${l.y})` : undefined}>{l.t}</text>
      ))}
    </g>
    <NavCube />
    <path d="M1887 736.500H1904" stroke="#8a1c20" strokeWidth="2" />
    <path d="M1902 733.500L1910 736.500L1902 739.500Z" fill="#8a1c20" />
    <path d="M1887 737V752" stroke="#1f8a24" strokeWidth="2" />
    <path d="M1884 751H1890L1888 759H1886Z" fill="#1f8a24" />
    <circle cx="1887" cy="735.500" r="1.800" fill="#2a2a90" />
    <g fontFamily={`"Liberation Sans", sans-serif`} fontSize="9.500" fill="#111">
      <text x="1889.500" y="737">Z</text><text x="1911.500" y="737">X</text><text x="1889.500" y="759">Y</text>
    </g>
  </svg>
);

/* ---------- report, status, taskbar ---------- */

const Report = styled.section`height: 214px; flex: none; padding-top: 1px;`;
const ReportBody = styled.div`margin-top: 2px; height: 192px; background: #fff; border: 1px solid #7d7d7d;`;
const StatusBar = styled.footer`height: 29px; flex: none; display: flex; align-items: center; padding: 2px 0 0 2px; white-space: nowrap; letter-spacing: -0.36px;`;
const StatusText = styled.span`width: 1710px;`;
const StatusCell = styled.div<{ $w: number; $ls?: number }>`
  width: ${p => p.$w}px; height: 25px; border-left: 1px solid #cfcfcf; display: flex; align-items: center; justify-content: flex-end; gap: 4px; padding-right: 4px;
  letter-spacing: ${p => p.$ls ?? -0.25}px;
`;
const TaskBar = styled.div`height: 40px; flex: none; background: #25211f; display: flex; color: #fff; font-family: ${SEGOE};`;
const StartButton = styled.div`width: 48px; display: grid; place-items: center;`;
const SearchBox = styled.div`
  width: 344px; background: #333130; border: 1px solid #5c5a59; display: flex; align-items: center; padding-left: 11px; gap: 11px;
  font-size: 14.5px; letter-spacing: -0.05px; color: #c9c7c6;
  span { padding-top: 2px; }
`;
const AppButton = styled.div<{ $run?: boolean; $active?: boolean }>`
  width: 49px; display: grid; place-items: center;
  background: ${p => (p.$run ? "linear-gradient(#aaa5a2, #aaa5a2)" : "none")} center bottom / ${p => (p.$active ? 49 : 40)}px 2px no-repeat ${p => (p.$active ? "#54504e" : "transparent")};
`;
const TrayArea = styled.div`margin-left: auto; display: flex; align-items: center; height: 40px;`;
const TrayCell = styled.div<{ $w: number }>`width: ${p => p.$w}px; display: grid; place-items: center; font-size: 11.5px; letter-spacing: -0.2px;`;
const Clock = styled.div`width: 64px; margin-right: 2px; text-align: center; font-size: 11.5px; line-height: 18px; letter-spacing: -0.22px;`;
const ShowDesktop = styled.div`width: 5px; height: 100%; border-left: 1px solid #6b6866;`;

const APPS: { k: string; run?: boolean; active?: boolean; svg: React.ReactNode }[] = [
  { k: "taskview", svg: <g fill="none" stroke="#fff" strokeWidth="1.400"><path d="M4 3V5.500H15V3M4 21V18.500H15V21M4 8.500H15V15.500H4ZM19 3V21" /><path d="M19 8V12" strokeWidth="3" /></g> },
  { k: "explorer", run: true, svg: <g><path d="M1 3H9L11 5H23V21H1Z" fill="#f2b52e" /><path d="M1 7H23V21H1Z" fill="#fddb6b" /><path d="M5 22V14.500C5 13 6 12.500 7 12.500H17C18 12.500 19 13 19 14.500V22H15V17H9V22Z" fill="#3f9be5" /></g> },
  { k: "edge", svg: <g><circle cx="12" cy="12" r="11.500" fill="#1878c9" /><path d="M.8 10C2 3 8 .5 12 .5C19 .5 23.500 6 23.500 11C23.500 15 19.500 16.500 16 15.500C14.500 15 15.500 13 15.500 11.500C15 6 6 4.500 .8 10Z" fill="#38c6b4" /><path d="M14 .7C20 1.500 23.500 6 23.500 11C23.500 15 19.500 16.500 16 15.500C14.500 15 15.500 13 15.500 11.500C20 10 19 4 14 .7Z" fill="#5bdc68" /><path d="M9 13C8 19 15 22 21 18C18 23 12 24 9 22.500C5 20 5 14 9 13Z" fill="#0c4f9e" /></g> },
  { k: "chrome", run: true, svg: <g><circle cx="12" cy="12" r="11.500" fill="#f5c518" /><path d="M12 12L2 6.500A11.500 11.500 0 0 1 22 6.500H12Z" fill="#df3b30" /><path d="M2 6.500A11.500 11.500 0 0 0 11 23.500L16.500 14L7 13Z" fill="#2fa24f" /><circle cx="12" cy="12" r="5.600" fill="#fff" /><circle cx="12" cy="12" r="4.400" fill="#3b7ded" /></g> },
  { k: "discord", run: true, svg: <g><circle cx="12" cy="12" r="11.800" fill="#5865f2" /><path d="M6.500 7.500C10 6 14 6 17.500 7.500C19 10.500 19.500 13 19 16C17.500 17.200 16 17.500 15.500 17.300L14.800 16H9.200L8.500 17.300C7.500 17.300 6 17 5 16C4.500 13 5 10.500 6.500 7.500Z" fill="#fff" /><circle cx="9.500" cy="12.500" r="1.500" fill="#5865f2" /><circle cx="14.500" cy="12.500" r="1.500" fill="#5865f2" /></g> },
  { k: "steam", run: true, svg: <SteamMark /> },
  { k: "streamlabs", svg: <g><rect x="0" y="0" width="24" height="24" rx="2.500" fill="#31c3a2" /><rect x="4" y="6" width="16" height="11.500" rx="3.500" fill="none" stroke="#12352f" strokeWidth="1.800" /><rect x="6.500" y="8.500" width="11" height="6" rx="2.500" fill="#12352f" /><circle cx="9.500" cy="11.500" r="1.100" fill="#31c3a2" /><circle cx="14.500" cy="11.500" r="1.100" fill="#31c3a2" /><path d="M11 19.500H20" stroke="#12352f" strokeWidth="1.500" /></g> },
  { k: "obs", svg: <g><circle cx="12" cy="12" r="11" fill="#262428" stroke="#c8c8c8" strokeWidth="1.200" /><g fill="none" stroke="#c4c4c4" strokeWidth="2.400"><path d="M8 4C6 8 9 12 13 11.500" /><path d="M19.500 9C17 8 13 9 12.500 13" /><path d="M12.500 12C14 15 13 19 9 20" /></g></g> },
  { k: "orb", svg: <g><circle cx="12" cy="12" r="10.800" fill="#aab3ea" stroke="#e4e7fb" strokeWidth="1" /><circle cx="12" cy="12" r="7.500" fill="#7a87d6" /><circle cx="12" cy="7.500" r="3" fill="#fff" /><path d="M7 9L10.500 11H13.500L17 9L14.500 14L18 19C15 17 9 17 6 19L9.500 14Z" fill="#fff" /></g> },
  { k: "monitor", run: true, svg: <g><path d="M7 1.500L23 1V15.500L9 17Z" fill="#c2c7ca" stroke="#8b9196" /><path d="M1.500 4L5 3L7 17L3 16Z" fill="#dfe2e4" stroke="#8b9196" strokeWidth=".7" /><path d="M8.500 3.500L21 3V13.500L10 14.500Z" fill="#f4f9fc" /><path d="M10 11L12.500 7L14.500 12L17 5.500L19 11" fill="none" stroke="#2e8fd0" strokeWidth="1.400" /><path d="M12 17L18 16V20L21 21.500L12 23L8 21Z" fill="#b9bec1" /></g> },
  { k: "cmd", run: true, svg: <g><rect x=".5" y="2" width="23" height="20" fill="#060606" stroke="#9a9a9a" /><path d="M1 3.500H23" stroke="#dcdcdc" strokeWidth="2.400" /><text x="3" y="11.500" fontSize="6" fontFamily={`"Liberation Mono", monospace`} fill="#fff">C:\_</text></g> },
  { k: "freecad", run: true, active: true, svg: <FreeCadMark bright /> },
];

const MENU: [string, number][] = [["File", 34], ["Edit", 36], ["View", 41], ["Tools", 43], ["Macro", 50], ["Sketch", 51], ["Windows", 65], ["Help", 40]];
const DOCS = [
  { t: "Start page", w: 114, pl: 9, ls: -0.3 },
  { t: "Box C.1 : 1", w: 115, pl: 11, ls: -0.2 },
  { t: "Box C.2 : 1*", w: 127, pl: 13, ls: -0.12, on: true },
];

export default function App() {
  return (
    <Window>
      <Global />
      <TitleBar>
        <svg width="16" height="16" viewBox="0 0 24 24"><FreeCadMark /></svg>
        <TitleText>FreeCAD 0.19</TitleText>
        <WinButtons>
          <WinButton $w={48}><svg width="10" height="10"><path d="M0 5.500H10" stroke="#000" /></svg></WinButton>
          <WinButton $w={42}><svg width="10" height="10" viewBox="0 0 10 10"><path d="M.5 2.500H7.500V9.500H.5ZM2.500 2.500V.5H9.500V7.500H7.500" fill="none" stroke="#000" /></svg></WinButton>
          <WinButton $w={50}><svg width="11" height="11" viewBox="0 0 11 11"><path d="M.5 .5L10.500 10.500M10.500 .5L.5 10.500" stroke="#000" strokeWidth="1.100" /></svg></WinButton>
        </WinButtons>
      </TitleBar>
      <MenuBar>{MENU.map(([t, w]) => <MenuItem key={t} $w={w}>{t}</MenuItem>)}</MenuBar>

      <ToolRow $h={34}>
        <ToolBar $w={401}><Grip /><Tools items="new open save print | cut copy paste | undo v redo w | refresh | whats" /></ToolBar>
        <ToolBar $w={157}>
          <Grip />
          <WorkbenchSelect>
            <svg width="15" height="16" viewBox="0 0 16 16"><g fill="none" stroke="#c9161b" strokeWidth="1.700"><rect x="1" y="6" width="9" height="9" /><circle cx="10.500" cy="5.500" r="4.500" /></g></svg>
            <span>Sketcher</span><Chevron />
          </WorkbenchSelect>
        </ToolBar>
        <ToolBar $w={136}><Grip /><Tools items="record stopMacro macros play" /></ToolBar>
        <ToolBar $last>
          <Grip />
          <Tools items="coincident pointOn vertical horizontal parallel perp tangent equal symmetric block | lock hdist vdist dist radius v angle snell | driving activate" />
        </ToolBar>
      </ToolRow>
      <ToolRow $h={34}>
        <ToolBar $w={574}><Grip /><Tools items="fitAll fitSel drawStyle v bbox | back fwd link v | zoomIcon v iso | front top right | rear bottom left | ruler" /></ToolBar>
        <ToolBar $w={592}><Grip /><Tools items="point line arc v circle v cone v bspline v | polyline rect polygon v slot | fillet v trim extend external carbon construction" /></ToolBar>
        <ToolBar $w={148}><Grip /><Tools items="part group mklink mklinks w" /></ToolBar>
        <ToolBar $w={352}><Grip /><Tools items="sketchNew sketchEdit sketchLeave sketchView section mapFace reorient validate merge mirror stop" /></ToolBar>
        <ToolBar $w={144}><Grip /><Tools items="dof selC selE" /><More $w={40}>»</More></ToolBar>
        <ToolBar $w={67}><Grip /><Tools items="bsplineInfo v" /><More $w={13}>»</More></ToolBar>
        <ToolBar $last><Grip /><Tools items="virtual" /></ToolBar>
      </ToolRow>

      <Workspace>
        <SidePanel>
          <DockTitle $w={268}><span>Combo View</span><FloatIcon /></DockTitle>
          <TabStrip>
            <SideTab $w={48}>Model</SideTab>
            <SideTab $w={73} $on>
              <svg width="16" height="16" viewBox="0 0 16 16"><path d="M1 2L5 .5L14 9.500L15.500 15L10 13.500L1 5Z" fill="#3f6a9e" stroke="#1c3757" /><path d="M3 2L12.500 11.500" stroke="#16304f" strokeWidth="1.400" /></svg>
              Tasks
            </SideTab>
          </TabStrip>
          <TabPane>
            <ScrollFrame>
              <TaskArea>
                <CloseWrap><PushButton $w={73}>Close</PushButton></CloseWrap>
                <Group $gap={9}>
                  <Head title="Solver messages" />
                  <GroupBody $h={111}>
                    <Line $h={20} $t={9}><Good>Fully constrained sketch</Good></Line>
                    <Line $h={18}><Good>Solved in 0 sec</Good></Line>
                    <Line $h={24}><CheckBox />Auto remove redundants</Line>
                    <Line $h={28} $j><Inline><CheckBox />Auto update</Inline><PushButton $w={94} $mr={1}>Update</PushButton></Line>
                  </GroupBody>
                </Group>
                <Group $gap={10}><Head title="Edit controls" /></Group>
                <Group $gap={8}>
                  <Head title="Constraints" />
                  <GroupBody $h={291}>
                    <Line $h={26} $t={10} $j>Filter:<Select>All<Chevron w={9} /></Select></Line>
                    <Line $h={22}><CheckBox on />Hide internal alignment</Line>
                    <Line $h={14} $t={5} $b={7}><CheckBox />Extended information</Line>
                    <ListBox>
                      <ListItems>
                        {CONSTRAINTS.map(([icon, t]) => <ListRow key={t}><CheckBox on /><Icon name={icon} size={16} />{t}</ListRow>)}
                      </ListItems>
                      <ScrollBar $w={17}>
                        <ScrollCap><Chevron up sw={2} c="#505050" /></ScrollCap><Thumb $h={51} /><Spacer /><ScrollCap><Chevron sw={2} c="#505050" /></ScrollCap>
                      </ScrollBar>
                    </ListBox>
                  </GroupBody>
                </Group>
                <Group $gap={0}>
                  <Head title="Elements" />
                  <GroupBody $h={90}>
                    <Line $h={20} $j $t={13} $b={6}>Type:<Select $off>Edge<Chevron c="#9a9a9a" /></Select></Line>
                    <Line $h={20} $j><Spacer /><Select $off /></Line>
                  </GroupBody>
                </Group>
              </TaskArea>
              <ScrollBar $w={17}>
                <ScrollCap><Chevron up sw={2} c="#505050" /></ScrollCap><Thumb $h={390} /><Spacer /><ScrollCap><Chevron sw={2} c="#505050" /></ScrollCap>
              </ScrollBar>
            </ScrollFrame>
          </TabPane>
        </SidePanel>
        <DocArea>
          <Scene />
          <DocTabs>
            {DOCS.map(d => (
              <DocTab key={d.t} $w={d.w} $on={d.on} $pl={d.pl} $ls={d.ls}>
                <svg width="16" height="16" viewBox="0 0 24 24"><FreeCadMark /></svg>
                <span>{d.t}</span>
                <TabClose $on={d.on}><svg width="8" height="8" viewBox="0 0 8 8"><path d="M1 1L7 7M7 1L1 7" stroke="#fff" strokeWidth="2" /></svg></TabClose>
              </DocTab>
            ))}
          </DocTabs>
        </DocArea>
      </Workspace>

      <Report>
        <DockTitle>
          <span>Report view</span><FloatIcon />
          <svg width="8" height="8" viewBox="0 0 8 8"><path d="M.8 .8L7.200 7.200M7.200 .8L.8 7.200" stroke="#2e2e2e" strokeWidth="1.900" /></svg>
        </DockTitle>
        <ReportBody />
      </Report>
      <StatusBar>
        <StatusText>Preselected: Box_C_2.Body.Pocket001.Sketch003.H_Axis (46.598515 mm,0.000000 mm,-1.000000 µm)</StatusText>
        <StatusCell $w={83}>
          <svg width="10" height="14" viewBox="0 0 10 14"><rect x="1" y="1" width="8" height="12" rx="3.500" fill="#fff" stroke="#444" strokeWidth="1.600" /><path d="M5 3V6" stroke="#444" strokeWidth="1.500" /></svg>
          <Inline $gap={0}>Blende<DropArrow /></Inline>
        </StatusCell>
        <StatusCell $w={125} $ls={-0.62}>250.84 mm x 100.00 mm</StatusCell>
      </StatusBar>

      <TaskBar>
        <StartButton><svg width="16" height="16" viewBox="0 0 16 16"><path d="M0 2.300L6.700 1.300V7.500H0ZM7.600 1.200L16 0V7.500H7.600ZM0 8.500H6.700V14.700L0 13.700ZM7.600 8.500H16V16L7.600 14.800Z" fill="#fff" /></svg></StartButton>
        <SearchBox>
          <svg width="17" height="17" viewBox="0 0 17 17"><circle cx="10.500" cy="6" r="5" fill="none" stroke="#e6e6e6" strokeWidth="1.300" /><path d="M7 9.700L1 16" stroke="#e6e6e6" strokeWidth="1.400" /></svg>
          <span>Type here to search</span>
        </SearchBox>
        {APPS.map(a => <AppButton key={a.k} $run={a.run} $active={a.active}><svg width="24" height="24" viewBox="0 0 24 24">{a.svg}</svg></AppButton>)}
        <TrayArea>
          <TrayCell $w={24}><Chevron up w={12} c="#fff" sw={1.200} /></TrayCell>
          <TrayCell $w={24}><svg width="14" height="14" viewBox="0 0 14 14"><circle cx="7" cy="7" r="6.200" fill="#22332b" stroke="#2b7a55" strokeWidth="1.200" /></svg></TrayCell>
          <TrayCell $w={24}><svg width="16" height="16" viewBox="0 0 24 24"><SteamMark /></svg></TrayCell>
          <TrayCell $w={24}><svg width="15" height="15" viewBox="0 0 15 15"><rect x=".8" y="1" width="13.400" height="11.500" fill="none" stroke="#fff" strokeWidth="1.400" /><circle cx="7.500" cy="6.700" r="3" fill="none" stroke="#fff" strokeWidth="2.200" strokeDasharray="1.700 .65" /><circle cx="7.500" cy="6.700" r="2" fill="none" stroke="#fff" strokeWidth="1.500" /><path d="M4 14.300H11" stroke="#fff" strokeWidth="1.200" /></svg></TrayCell>
          <TrayCell $w={24}><svg width="16" height="14" viewBox="0 0 16 14"><path d="M.7 5H3L6.300 1.800V12.200L3 9H.7Z" fill="none" stroke="#fff" strokeWidth="1.200" /><path d="M8.500 4.500C10 6 10 8 8.500 9.500M10.700 2.800C13 5 13 9 10.700 11.200" fill="none" stroke="#fff" strokeWidth="1.200" /><path d="M12.800 1C16 4 16 10 12.800 13" fill="none" stroke="#8b8886" strokeWidth="1.200" /></svg></TrayCell>
          <TrayCell $w={24}><svg width="16" height="12" viewBox="0 0 16 12"><rect x="5" y="3" width="9.500" height="7.500" fill="#fff" stroke="#fff" /><path d="M15.500 5V8.500" stroke="#fff" /><path d="M0 2.500H5V5C5 6.500 0 6.500 0 5ZM1.300 0V2M3.700 0V2M2.500 6V10.500H5" stroke="#fff" fill="#25211f" /></svg></TrayCell>
          <TrayCell $w={26}><svg width="14" height="14" viewBox="0 0 14 14"><g fill="none" stroke="#fff" strokeWidth="1.300"><path d="M9 13C9 11 10 10 12 9.500M6 13C6 9 9 6.500 13 6.500" /><path d="M3 13C3 7 7 3.500 13 3.500M.7 13C.7 5 6 .7 13 .7" stroke="#8b8886" /></g><circle cx="12" cy="12.500" r="1.300" fill="#fff" /></svg></TrayCell>
          <TrayCell $w={32}>ENG</TrayCell>
          <Clock>12:27 AM<br />9/5/2021</Clock>
          <TrayCell $w={48}>
            <svg width="26" height="26" viewBox="0 0 26 26"><path d="M1 2H16V14H7L4 17V14H1Z" fill="#fff" /><path d="M3.500 5.500H13.500M3.500 8H13.500M3.500 10.500H10" stroke="#25211f" /><circle cx="16.500" cy="17" r="7.700" fill="#3b3937" stroke="#8b8886" /><text x="16.500" y="21" textAnchor="middle" fontFamily={SEGOE} fontSize="11" fontWeight="600" fill="#fff">4</text></svg>
          </TrayCell>
          <ShowDesktop />
        </TrayArea>
      </TaskBar>
    </Window>
  );
}
